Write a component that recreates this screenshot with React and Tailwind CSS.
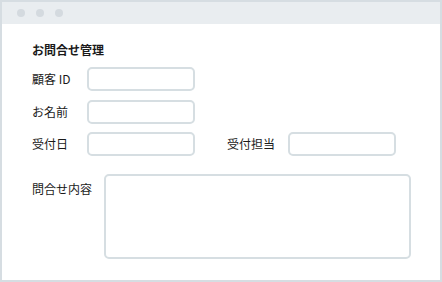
import React from "react";

const font = { fontFamily: '"Noto Sans CJK JP", "Noto Sans", sans-serif' };

function Field({ className = "" }) {
  return <div className={`h-6 w-[108px] rounded-[5px] border-2 border-[#d6dee2] bg-white ${className}`} />;
}

export default function App() {
  return (
    <div className="w-[442px] h-[282px] bg-white">
      <div
        className="box-border w-[442px] h-[282px] border-2 border-[#d6dde2] bg-white text-[#1a1a1a] flex flex-col"
        style={font}
      >
        {/* window title bar */}
        <div className="h-[22px] bg-[#e9edf0] flex items-center gap-[11px] pl-[15px]">
          <div className="w-2 h-2 rounded-full bg-[#d4dadf]" />
          <div className="w-2 h-2 rounded-full bg-[#d4dadf]" />
          <div className="w-2 h-2 rounded-full bg-[#d4dadf]" />
        </div>

        <div className="pl-[30px] pt-[17px]">
          <div className="text-[12px] leading-[18px] font-bold">お問合せ管理</div>

          <div className="mt-[8px] flex items-center">
            <div className="w-[55px] text-[12px] leading-[18px]">顧客 ID</div>
            <Field />
          </div>

          <div className="mt-[9px] flex items-center">
            <div className="w-[55px] text-[12px] leading-[18px]">お名前</div>
            <Field />
          </div>

          <div className="mt-[8px] flex items-center">
            <div className="w-[55px] text-[12px] leading-[18px]">受付日</div>
            <Field />
            <div className="ml-[32px] w-[61px] text-[12px] leading-[18px]">受付担当</div>
            <Field />
          </div>

          <div className="mt-[18px] flex items-start">
            <div className="w-[72px] pt-[6px] text-[12px] leading-[18px]">問合せ内容</div>
            <div className="h-[85px] w-[307px] rounded-[5px] border-2 border-[#d6dee2] bg-white" />
          </div>
        </div>
      </div>
    </div>
  );
}
